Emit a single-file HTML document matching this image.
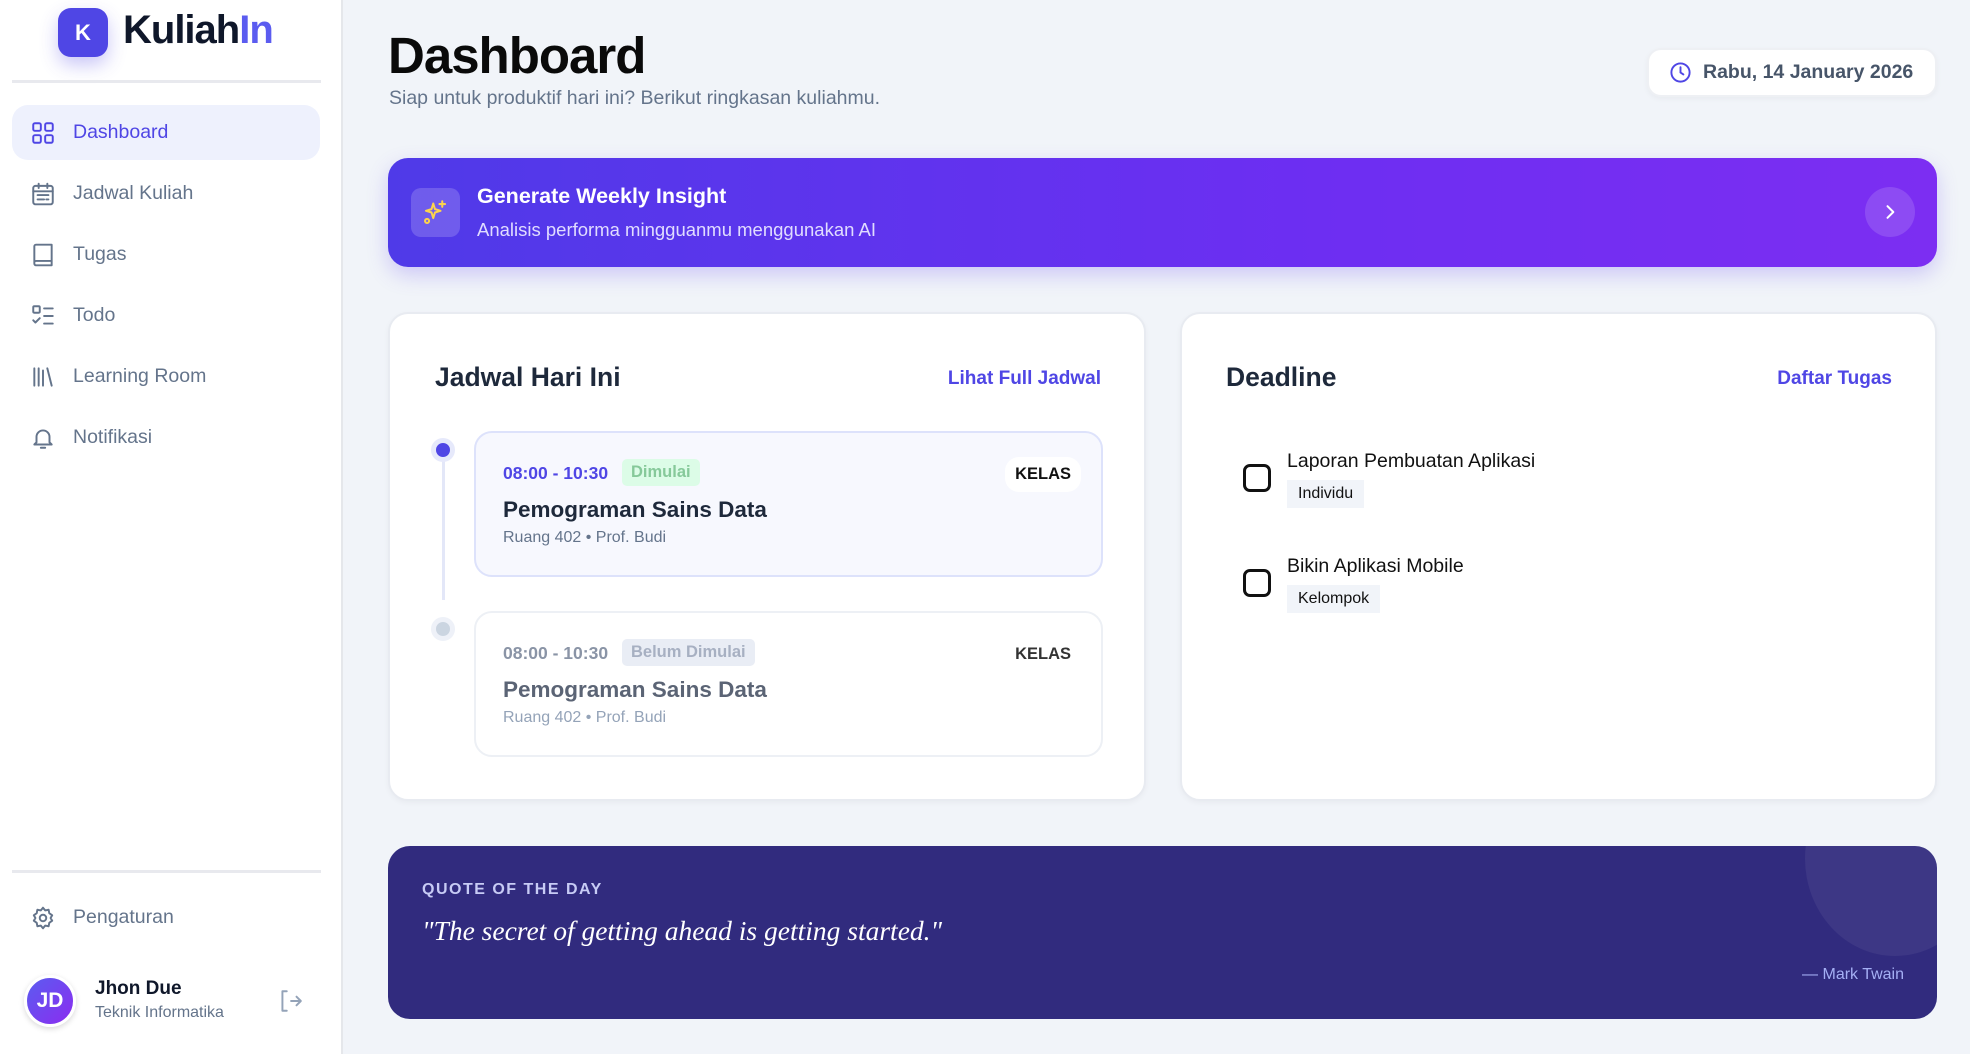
<!DOCTYPE html>
<html><head><meta charset="utf-8"><style>
*{margin:0;padding:0;box-sizing:border-box}
body{width:1970px;height:1054px;background:#f1f4f9;font-family:"Liberation Sans",sans-serif;position:relative;overflow:hidden}
.a{position:absolute}
.side{left:0;top:0;width:343px;height:1054px;background:#fff;border-right:2px solid #e5e7eb}
.nav{left:12px;width:308px;height:55px;display:flex;align-items:center;padding-left:18px;font-size:19.5px;color:#64748b;border-radius:16px}
.nav svg{width:26px;height:26px;margin-right:17px;fill:none;stroke:#64748b;stroke-width:1.8;stroke-linecap:round;stroke-linejoin:round}
.card{background:#fff;border-radius:20px;border:2px solid #e8ebf1;box-shadow:0 2px 6px rgba(0,0,0,.04)}
.item{border-radius:18px;border:2px solid #e5e9f5}
.t{white-space:nowrap}
</style></head><body>
<div class="a side">
  <div class="a" style="left:58px;top:8px;width:50px;height:49px;border-radius:13px;background:#4f46e5;box-shadow:0 8px 18px rgba(79,70,229,.3);color:#fff;font-weight:bold;font-size:22px;display:flex;align-items:center;justify-content:center">K</div>
  <div class="a t" style="left:123px;top:8px;font-size:40px;font-weight:bold;color:#0f172a;letter-spacing:-1px">Kuliah<span style="color:#5b5cf0">In</span></div>
  <div class="a" style="left:12px;top:80px;width:309px;height:3px;background:#e8e9ee"></div>
  <div class="a nav" style="top:105px;background:#eef1fd;color:#4f46e5"><svg viewBox="0 0 24 24" style="stroke:#4f46e5"><rect x="3" y="3" width="7" height="7" rx="1.5"/><rect x="14" y="3" width="7" height="7" rx="1.5"/><rect x="3" y="14" width="7" height="7" rx="1.5"/><rect x="14" y="14" width="7" height="7" rx="1.5"/></svg>Dashboard</div>
  <div class="a nav" style="top:166px"><svg viewBox="0 0 24 24"><rect x="3" y="4.5" width="18" height="17" rx="2"/><path d="M8 2.5v4M16 2.5v4M3 9.5h18M7 13h10M7 17h6M15 17h2"/></svg>Jadwal Kuliah</div>
  <div class="a nav" style="top:227px"><svg viewBox="0 0 24 24"><path d="M4 19V4a1.5 1.5 0 0 1 1.5-1.5H20v19H5.5A1.5 1.5 0 0 1 4 20v-1a1.5 1.5 0 0 1 1.5-1.5H20"/></svg>Tugas</div>
  <div class="a nav" style="top:288px"><svg viewBox="0 0 24 24"><rect x="3" y="3" width="6" height="6" rx="1"/><path d="M3 16l2 2 4-4M13 5h8M13 12h8M13 19h8"/></svg>Todo</div>
  <div class="a nav" style="top:349px"><svg viewBox="0 0 24 24"><path d="M4 4v16M8 4v16M12 6v14M16 4l4 16"/></svg>Learning Room</div>
  <div class="a nav" style="top:410px"><svg viewBox="0 0 24 24"><path d="M6 16V11a6 6 0 0 1 12 0v5l2 2H4z M10 21h4"/></svg>Notifikasi</div>
  <div class="a" style="left:12px;top:870px;width:309px;height:3px;background:#e8e9ee"></div>
  <div class="a nav" style="top:890px"><svg viewBox="0 0 24 24"><circle cx="12" cy="12" r="3"/><path d="M12 2.5l2 2.5 3.2-.6.6 3.2 2.7 1.9-1.5 2.5 1.5 2.5-2.7 1.9-.6 3.2-3.2-.6-2 2.5-2-2.5-3.2.6-.6-3.2L3.5 14.5 5 12 3.5 9.5l2.7-1.9.6-3.2 3.2.6z"/></svg>Pengaturan</div>
  <div class="a" style="left:24px;top:975px;width:52px;height:52px;border-radius:50%;background:linear-gradient(135deg,#5b5cf0,#8b2cf0);border:3px solid #fff;box-shadow:0 2px 6px rgba(0,0,0,.15);color:#fff;font-weight:bold;font-size:21px;display:flex;align-items:center;justify-content:center">JD</div>
  <div class="a t" style="left:95px;top:978px;font-size:19px;font-weight:bold;color:#0f172a">Jhon Due</div>
  <div class="a t" style="left:95px;top:1004px;font-size:16px;color:#64748b">Teknik Informatika</div>
  <svg class="a" style="left:277px;top:988px" width="26" height="26" viewBox="0 0 24 24" fill="none" stroke="#94a3b8" stroke-width="1.8" stroke-linecap="round" stroke-linejoin="round"><path d="M9 3H5v18h4M13 12h9M18 8l4 4-4 4"/></svg>
</div>

<div class="a t" style="left:388px;top:26px;font-size:51px;font-weight:bold;color:#0a0a0a;letter-spacing:-1px">Dashboard</div>
<div class="a t" style="left:389px;top:87px;font-size:19.5px;color:#64748b">Siap untuk produktif hari ini? Berikut ringkasan kuliahmu.</div>
<div class="a card" style="left:1647px;top:48px;width:290px;height:49px;border-radius:14px;display:flex;align-items:center;padding-left:20px;border:2px solid #eef0f4">
  <svg width="23" height="23" viewBox="0 0 24 24" fill="none" stroke="#4f46e5" stroke-width="2" stroke-linecap="round"><circle cx="12" cy="12" r="9.5"/><path d="M12 6.5V12l3 2"/></svg>
  <span class="t" style="margin-left:11px;font-size:19.5px;font-weight:bold;color:#475569">Rabu, 14 January 2026</span></div>

<div class="a" style="left:388px;top:158px;width:1549px;height:109px;border-radius:20px;background:linear-gradient(90deg,#4f3ae8,#6d2ef2 60%,#7c2ef2);box-shadow:0 8px 20px rgba(99,70,240,.25)">
  <div class="a" style="left:23px;top:30px;width:49px;height:49px;border-radius:10px;background:rgba(255,255,255,.18)"><svg style="margin:11px" width="27" height="27" viewBox="0 0 24 24" fill="none" stroke="#fcd34d" stroke-width="1.8" stroke-linecap="round" stroke-linejoin="round"><path d="M10 4l1.5 5 5 1.5-5 1.5L10 17l-1.5-5-5-1.5 5-1.5z"/><path d="M18 2v5M15.5 4.5h5"/><circle cx="4.5" cy="19.5" r="1.8"/></svg></div>
  <div class="a t" style="left:89px;top:26px;font-size:21.5px;font-weight:bold;color:#fff">Generate Weekly Insight</div>
  <div class="a t" style="left:89px;top:61px;font-size:18.5px;color:#e0dcff">Analisis performa mingguanmu menggunakan AI</div>
  <div class="a" style="left:1477px;top:29px;width:50px;height:50px;border-radius:50%;background:rgba(255,255,255,.14)"><svg style="margin:15px" width="20" height="20" viewBox="0 0 24 24" fill="none" stroke="#fff" stroke-width="2.4" stroke-linecap="round" stroke-linejoin="round"><path d="M9 5l7 7-7 7"/></svg></div>
</div>

<div class="a card" style="left:388px;top:312px;width:758px;height:489px">
  <div class="a t" style="left:45px;top:48px;font-size:26.5px;font-weight:bold;color:#1e293b">Jadwal Hari Ini</div>
  <div class="a t" style="right:43px;top:54px;font-size:19px;font-weight:bold;color:#4f46e5">Lihat Full Jadwal</div>
  <div class="a" style="left:52px;top:146px;width:3px;height:140px;background:#e3e7f8"></div>
  <div class="a" style="left:41px;top:124px;width:24px;height:24px;border-radius:50%;background:#4f46e5;border:5px solid #e6e9fb"></div>
  <div class="a" style="left:41px;top:303px;width:24px;height:24px;border-radius:50%;background:#cbd5e1;border:5px solid #eef1f8"></div>
  <div class="a item" style="left:84px;top:117px;width:629px;height:146px;background:#f7f8fe;border-color:#dde2fb">
    <div class="a t" style="left:27px;top:30px;font-size:17.5px;font-weight:bold;color:#4f46e5">08:00 - 10:30</div>
    <div class="a t" style="left:146px;top:26px;padding:4px 9px;border-radius:5px;background:#dcfce7;color:#86c99a;font-size:16.5px;font-weight:bold">Dimulai</div>
    <div class="a t" style="right:20px;top:24px;padding:8px 10px;border-radius:14px;background:#fff;font-size:16.5px;font-weight:bold;color:#111">KELAS</div>
    <div class="a t" style="left:27px;top:64px;font-size:22.5px;font-weight:bold;color:#1e293b">Pemograman Sains Data</div>
    <div class="a t" style="left:27px;top:96px;font-size:16px;color:#64748b">Ruang 402 • Prof. Budi</div>
  </div>
  <div class="a item" style="left:84px;top:297px;width:629px;height:146px;background:#fff;border-color:#edf0f5">
    <div class="a t" style="left:27px;top:30px;font-size:17.5px;font-weight:bold;color:#8a94a6">08:00 - 10:30</div>
    <div class="a t" style="left:146px;top:26px;padding:4px 9px;border-radius:5px;background:#e9edf5;color:#a7b0c2;font-size:16.5px;font-weight:bold">Belum Dimulai</div>
    <div class="a t" style="right:30px;top:32px;font-size:16.5px;font-weight:bold;color:#333">KELAS</div>
    <div class="a t" style="left:27px;top:64px;font-size:22.5px;font-weight:bold;color:#5b6475">Pemograman Sains Data</div>
    <div class="a t" style="left:27px;top:96px;font-size:16px;color:#94a3b8">Ruang 402 • Prof. Budi</div>
  </div>
</div>

<div class="a card" style="left:1180px;top:312px;width:757px;height:489px">
  <div class="a t" style="left:44px;top:48px;font-size:26.5px;font-weight:bold;color:#1e293b">Deadline</div>
  <div class="a t" style="right:43px;top:54px;font-size:19px;font-weight:bold;color:#4f46e5">Daftar Tugas</div>
  <div class="a" style="left:61px;top:150px;width:28px;height:28px;border:3px solid #111;border-radius:7px"></div>
  <div class="a t" style="left:105px;top:136px;font-size:19.5px;color:#111">Laporan Pembuatan Aplikasi</div>
  <div class="a t" style="left:105px;top:166px;padding:5px 11px;background:#f1f4f9;font-size:16px;color:#111">Individu</div>
  <div class="a" style="left:61px;top:255px;width:28px;height:28px;border:3px solid #111;border-radius:7px"></div>
  <div class="a t" style="left:105px;top:241px;font-size:19.5px;color:#111">Bikin Aplikasi Mobile</div>
  <div class="a t" style="left:105px;top:271px;padding:5px 11px;background:#f1f4f9;font-size:16px;color:#111">Kelompok</div>
</div>

<div class="a" style="left:388px;top:846px;width:1549px;height:173px;border-radius:22px;background:#312b7e;overflow:hidden">
  <div class="a" style="left:1417px;top:-85px;width:180px;height:195px;border-radius:50%;background:rgba(255,255,255,.06)"></div>
  <div class="a t" style="left:34px;top:35px;font-size:16px;font-weight:bold;color:#c7cbf5;letter-spacing:1.5px">QUOTE OF THE DAY</div>
  <div class="a t" style="left:34px;top:69px;font-size:27.5px;font-style:italic;font-family:'Liberation Serif',serif;color:#fff">"The secret of getting ahead is getting started."</div>
  <div class="a t" style="right:33px;top:120px;font-size:16px;color:#a5b0f5">— Mark Twain</div>
</div>
</body></html>
